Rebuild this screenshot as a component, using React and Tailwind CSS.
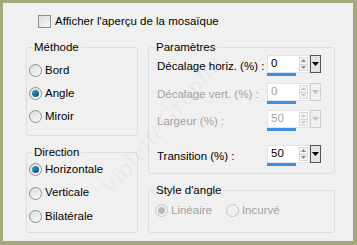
import React from 'react';

const font = { fontFamily: '"Liberation Sans", Arial, sans-serif' };

function Radio({ checked, disabled, label }) {
  return (
    <div className="flex items-center whitespace-nowrap">
      <span
        className={`flex h-[13px] w-[13px] items-center justify-center rounded-full border ${
          disabled
            ? 'border-[#c4c4c4] bg-[#f0f0f0]'
            : 'border-[#8c8f91] bg-gradient-to-br from-[#dcdcdc] to-[#fafafa]'
        }`}
      >
        {checked && (
          <span
            className={`h-[7px] w-[7px] rounded-full ${
              disabled ? 'bg-[#b8b8b8]' : 'bg-gradient-to-br from-[#3aa2c8] to-[#0d4a66]'
            }`}
          />
        )}
      </span>
      <span className={`ml-[3px] text-[11.5px] ${disabled ? 'text-[#a3a3a3]' : 'text-black'}`}>{label}</span>
    </div>
  );
}

function Group({ title, className, children }) {
  return (
    <fieldset className={`rounded-[3px] border border-[#d5dfe5] ${className}`}>
      <legend className="ml-[5px] whitespace-nowrap px-[2px] text-[11.5px] leading-[14px] text-black">{title}</legend>
      {children}
    </fieldset>
  );
}

function Spin({ value, disabled }) {
  return (
    <div className="flex shrink-0 flex-col">
      <div className="flex h-[18px] items-stretch">
        <div className="flex w-[43px] items-center justify-between border border-[#e2e3e6] bg-white pl-[3px] pr-[1px]">
          <span className={`text-[11.5px] ${disabled ? 'text-[#a3a3a3]' : 'text-black'}`}>{value}</span>
          <span className="flex h-[14px] w-[9px] flex-col items-center justify-center border border-[#d9d9d9] bg-[#f4f4f4]">
            <svg width="5" height="4" viewBox="0 0 5 4">
              <path d="M0 3 L2.5 0 L5 3 Z" fill={disabled ? '#c8c8c8' : '#8a8a8a'} />
            </svg>
            <span className="my-[1px] h-px w-[7px] bg-[#d4d4d4]" />
            <svg width="5" height="4" viewBox="0 0 5 4">
              <path d="M0 0 L2.5 3 L5 0 Z" fill={disabled ? '#c8c8c8' : '#8a8a8a'} />
            </svg>
          </span>
        </div>
        <div
          className={`flex w-[11px] items-center justify-center border ${
            disabled ? 'border-[#cfcfcf] bg-[#f0f0f0]' : 'border-[#555] bg-[#e4e4e4]'
          }`}
        >
          <svg width="7" height="4" viewBox="0 0 7 4">
            <path d="M0 0 L3.5 4 L7 0 Z" fill={disabled ? '#c0c0c0' : '#000'} />
          </svg>
        </div>
      </div>
      <span className="h-[3px] w-[29px] bg-[#3d8fe0]" />
    </div>
  );
}

function Row({ label, value, disabled, className }) {
  return (
    <div className={`flex items-start pl-[8px] ${className}`}>
      <span className={`mt-[3px] w-[110px] whitespace-nowrap text-[11.5px] ${disabled ? 'text-[#a3a3a3]' : 'text-black'}`}>{label}</span>
      <Spin value={value} disabled={disabled} />
    </div>
  );
}

export default function App() {
  return (
    <div className="h-[245px] w-[357px] bg-[#a5a97a] pb-[4px] pl-[3px] pr-[4px] pt-[3px]" style={font}>
      <div className="relative h-full w-full overflow-hidden bg-[#f0f0f0]">
        <div className="flex items-center pl-[35px] pt-[11px]">
          <span className="h-[13px] w-[13px] border border-[#8e8f8f] bg-gradient-to-br from-[#dcdcdc] to-[#f6f6f6]" />
          <span className="ml-[4px] whitespace-nowrap text-[11.5px] leading-[14px] text-black">Afficher l'aperçu de la mosaïque</span>
        </div>

        <div className="ml-[23px] mt-[12px] flex gap-[10px]">
          <div className="flex w-[112px] flex-col gap-[9px]">
            <Group title="Méthode" className="h-[96px]">
              <div className="flex flex-col pl-[2px] pt-[5px]">
                <div className="flex h-[23px] items-center"><Radio label="Bord" /></div>
                <div className="flex h-[23px] items-center"><Radio label="Angle" checked /></div>
                <div className="flex h-[23px] items-center"><Radio label="Miroir" /></div>
              </div>
            </Group>
            <Group title="Direction" className="h-[88px]">
              <div className="-mt-[1px] flex flex-col pl-[2px]">
                <div className="flex h-[23px] items-center"><Radio label="Horizontale" checked /></div>
                <div className="flex h-[24px] items-center"><Radio label="Verticale" /></div>
                <div className="flex h-[23px] items-center"><Radio label="Bilatérale" /></div>
              </div>
            </Group>
          </div>

          <div className="flex w-[187px] flex-col gap-[9px]">
            <Group title="Paramètres" className="h-[134px]">
              <div className="flex flex-col pt-[1px]">
                <Row label="Décalage horiz. (%) :" value="0" />
                <Row label="Décalage vert. (%) :" value="0" disabled className="mt-[7px]" />
                <Row label="Largeur (%) :" value="50" disabled className="mt-[6px]" />
                <Row label="Transition (%) :" value="50" className="mt-[14px]" />
              </div>
            </Group>
            <Group title="Style d'angle" className="h-[50px]">
              <div className="flex items-center gap-[14px] pl-[6px] pt-[5px]">
                <Radio label="Linéaire" checked disabled />
                <Radio label="Incurvé" disabled />
              </div>
            </Group>
          </div>
        </div>

        <div className="pointer-events-none absolute left-[70px] top-[100px] -rotate-[50deg] select-none text-[26px] italic tracking-[1px] text-black/[0.05]" style={{ fontFamily: '"Liberation Serif", serif' }}>
          VioletteGraphic
        </div>
      </div>
    </div>
  );
}
